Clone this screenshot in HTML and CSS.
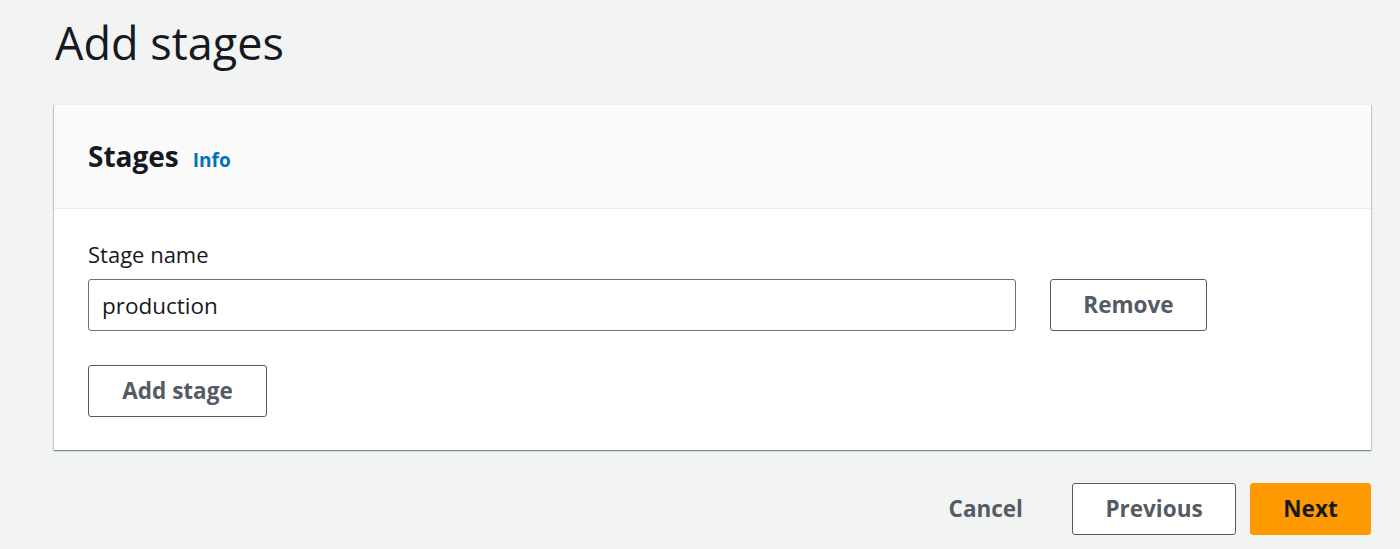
FILE: index.html
```html
<!DOCTYPE html>
<html lang="en">
<head>
<meta charset="utf-8">
<title>Add stages</title>
<link rel="stylesheet" href="styles.css">
</head>
<body>
<main class="page">
  <h1 class="page-title">Add stages</h1>
  <section class="card">
    <header class="card-header">
      <h2 class="card-title">Stages</h2>
      <a class="info-link" href="#">Info</a>
    </header>
    <div class="card-body">
      <label class="field-label" for="stage-name">Stage name</label>
      <div class="stage-row">
        <input id="stage-name" class="text-input" type="text" value="production">
        <button class="btn btn-normal btn-remove" type="button">Remove</button>
      </div>
      <button class="btn btn-normal btn-add" type="button">Add stage</button>
    </div>
  </section>
  <footer class="actions">
    <button class="btn btn-link" type="button">Cancel</button>
    <button class="btn btn-normal btn-prev" type="button">Previous</button>
    <button class="btn btn-primary btn-next" type="button">Next</button>
  </footer>
</main>
</body>
</html>
```

FILE: styles.css
```css
* { box-sizing: border-box; }

html, body {
  margin: 0;
  padding: 0;
  background: #f2f3f3;
  font-family: "Open Sans", "Noto Sans", sans-serif;
  color: #16191f;
}

.page {
  padding: 14px 29px 0 54px;
}

.page-title {
  margin: 0 0 0 1px;
  font-size: 45px;
  font-weight: 400;
  line-height: 58px;
  height: 90px;
}

.card {
  background: #ffffff;
  border-top: 1px solid #eaeded;
  box-shadow: 0 1px 1px 0 rgba(0, 28, 36, 0.3),
              1px 1px 1px 0 rgba(0, 28, 36, 0.15),
              -1px 1px 1px 0 rgba(0, 28, 36, 0.15);
}

.card-header {
  display: flex;
  align-items: baseline;
  gap: 14px;
  height: 104px;
  padding: 32px 34px 0;
  background: #fafafa;
  border-bottom: 1px solid #eaeded;
}

.card-title {
  margin: 0;
  font-size: 28px;
  font-weight: 700;
  line-height: 38px;
}

.info-link {
  color: #0073bb;
  font-weight: 700;
  font-size: 19px;
  text-decoration: none;
}

.card-body {
  padding: 30px 34px 33px;
}

.field-label {
  display: block;
  font-size: 22px;
  line-height: 30px;
  margin-bottom: 10px;
}

.stage-row {
  display: flex;
  align-items: center;
  gap: 34px;
  margin-bottom: 34px;
}

.text-input {
  width: 928px;
  height: 52px;
  padding: 0 13px;
  border: 1px solid #687078;
  border-radius: 3px;
  font-family: inherit;
  font-size: 22.5px;
  color: #16191f;
  background: #ffffff;
}

.btn {
  font-family: inherit;
  font-weight: 700;
  font-size: 22.5px;
  height: 52px;
  padding: 0 30px;
  border-radius: 3px;
  cursor: pointer;
  line-height: 1;
}

.btn-normal {
  background: #ffffff;
  color: #545b64;
  border: 1.5px solid #545b64;
}

.btn-remove { width: 157px; }
.btn-add { width: 179px; }

.actions {
  display: flex;
  justify-content: flex-end;
  align-items: center;
  gap: 14px;
  margin-top: 33px;
}

.btn-link {
  background: transparent;
  border: 1.5px solid transparent;
  color: #545b64;
  padding: 0 34px 0 30px;
}

.btn-prev { width: 164px; }

.btn-primary {
  background: #ff9900;
  border: 1.5px solid #ff9900;
  color: #16191f;
  width: 121px;
}
```
